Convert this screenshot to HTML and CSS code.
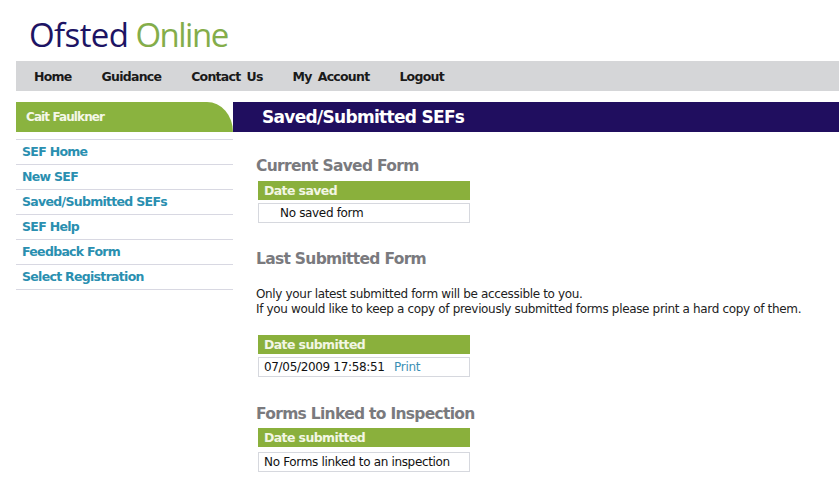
FILE: index.html
```html
<!DOCTYPE html>
<html>
<head>
    <meta charset="utf-8" />
    <title>Ofsted Online</title>
    <link rel="stylesheet" href="styles.css">
</head>
<body>
    <div class="logo"><span class="logo1">Ofsted</span> <span class="logo2">Online</span></div>
    <div class="nav">
        <a>Home</a>
        <a>Guidance</a>
        <a>Contact Us</a>
        <a>My Account</a>
        <a>Logout</a>
    </div>
    <div class="page">
        <div class="side">
            <div class="user">Cait Faulkner</div>
            <ul class="menu">
                <li>SEF Home</li>
                <li>New SEF</li>
                <li>Saved/Submitted SEFs</li>
                <li>SEF Help</li>
                <li>Feedback Form</li>
                <li>Select Registration</li>
            </ul>
        </div>
        <div class="main">
            <h1>Saved/Submitted SEFs</h1>
            <div class="content">
                <h2 class="h-first">Current Saved Form</h2>
                <div class="box">
                    <div class="box-head">Date saved</div>
                    <div class="box-row indent">No saved form</div>
                </div>

                <h2 class="h-last">Last Submitted Form</h2>
                <p class="note">Only your latest submitted form will be accessible to you.<br>If you would like to keep a copy of previously submitted forms please print a hard copy of them.</p>
                <div class="box">
                    <div class="box-head">Date submitted</div>
                    <div class="box-row">07/05/2009 17:58:51 <a class="print">Print</a></div>
                </div>

                <h2 class="h-linked">Forms Linked to Inspection</h2>
                <div class="box box-linked">
                    <div class="box-head">Date submitted</div>
                    <div class="box-row">No Forms linked to an inspection</div>
                </div>
            </div>
        </div>
    </div>
</body>
</html>
```

FILE: styles.css
```css
* {
    padding: 0;
    margin: 0;
}

body {
    font-family: "DejaVu Sans", Tahoma, sans-serif;
    font-size: 12px;
    color: #111;
    background-color: #fff;
    overflow: hidden;
}

.logo {
    height: 61px;
    box-sizing: border-box;
    padding: 12px 0 0 29px;
    font-family: "Open Sans", sans-serif;
    font-size: 33px;
    line-height: 46px;
    letter-spacing: -0.6px;
}

.logo1 {
    color: #1d1464;
}

.logo2 {
    margin-left: -1px;
    color: #84ad4a;
    letter-spacing: -1.5px;
}

.nav {
    display: flex;
    margin-left: 16px;
    height: 30px;
    padding-left: 18px;
    gap: 30px;
    align-items: center;
    background-color: #d5d6d8;
    font-weight: bold;
    font-size: 12.5px;
    letter-spacing: -0.75px;
    word-spacing: 2.5px;
    color: #1a1a1a;
}

.page {
    display: flex;
    margin: 11px 0 0 16px;
}

.side {
    width: 217px;
    flex-shrink: 0;
}

.user {
    height: 30px;
    line-height: 30px;
    padding-left: 10px;
    background-color: #8ab33f;
    border-top-right-radius: 26px 30px;
    color: #f4f7e8;
    font-weight: bold;
    letter-spacing: -0.9px;
}

.menu {
    list-style: none;
    margin-top: 7px;
    border-top: 1px solid #d8d8e2;
    color: #2a8fb0;
    font-weight: bold;
    font-size: 12.5px;
    letter-spacing: -0.7px;
}

.menu li {
    height: 24px;
    line-height: 24px;
    padding-left: 6px;
    border-bottom: 1px solid #d8d8e2;
}

.main {
    flex: 1;
}

h1 {
    height: 30px;
    line-height: 31px;
    padding-left: 29px;
    background-color: #200e5f;
    color: #fff;
    font-size: 17px;
    letter-spacing: -0.7px;
}

.content {
    padding-left: 23px;
}

h2 {
    font-size: 15.5px;
    line-height: 20px;
    color: #7a7a7e;
    letter-spacing: -0.7px;
}

.h-first {
    margin-top: 24px;
}

.h-last {
    margin-top: 26px;
}

.h-linked {
    margin-top: 27px;
}

.note {
    margin-top: 18px;
    line-height: 15px;
    letter-spacing: -0.34px;
    color: #222;
}

.box {
    width: 212px;
    margin: 5px 0 0 2px;
}

.note + .box {
    margin-top: 18px;
}

.box-linked {
    margin-top: 4px;
}

.box-head {
    height: 19px;
    line-height: 20px;
    padding-left: 6px;
    background-color: #8ab03c;
    color: #f2f6e4;
    font-weight: bold;
    font-size: 12.5px;
    letter-spacing: -0.6px;
}

.box-row {
    box-sizing: border-box;
    width: 212px;
    height: 20px;
    margin-top: 3px;
    line-height: 18px;
    padding-left: 5px;
    border: 1px solid #d6d8de;
    letter-spacing: -0.33px;
}

.box-linked .box-row {
    margin-top: 5px;
}

.indent {
    padding-left: 21px;
}

.print {
    margin-left: 6px;
    color: #3a8fb5;
}
```
